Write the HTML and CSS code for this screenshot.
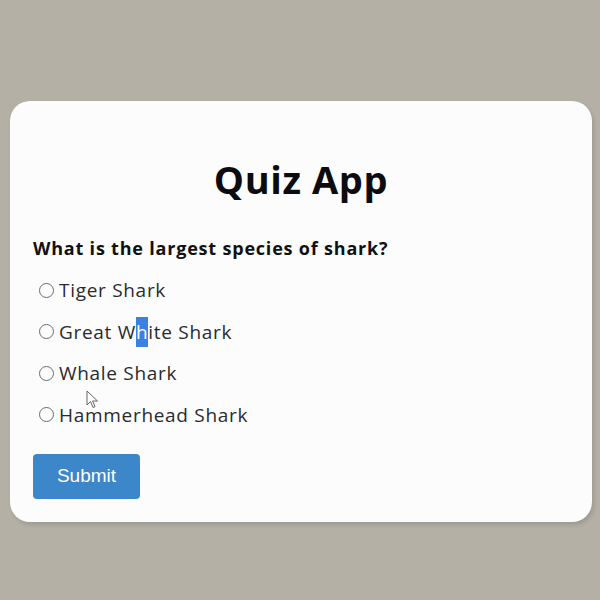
FILE: index.html
```html
<!DOCTYPE html>
<html>
<head>
<meta charset="utf-8">
<link rel="stylesheet" href="styles.css">
</head>
<body>
<div class="card">
  <h1 class="title">Quiz App</h1>
  <p class="question">What is the largest species of shark?</p>
  <ul class="options">
    <li class="option"><span class="radio"></span><span>Tiger Shark</span></li>
    <li class="option"><span class="radio"></span><span>Great W<span class="sel">h</span>ite Shark</span></li>
    <li class="option"><span class="radio"></span><span>Whale Shark</span></li>
    <li class="option"><span class="radio"></span><span>Hammerhead Shark</span>
      <svg class="cursor" width="14" height="20" viewBox="0 0 14 20"><path d="M1 1 L1 15 L4.5 11.5 L7 17.5 L9 16.7 L6.6 11 L11.5 11 Z" fill="#fff" stroke="#666" stroke-width="1" stroke-linejoin="round"/></svg>
    </li>
  </ul>
  <button class="submit">Submit</button>
</div>
</body>
</html>
```
FILE: styles.css
```css
html, body { margin: 0; padding: 0; }
body {
  background: #b4b0a6;
  width: 600px;
  height: 600px;
  font-family: "Open Sans", "DejaVu Sans", sans-serif;
  padding-top: 101px;
  box-sizing: border-box;
}
.card {
  margin-left: 10px;
  width: 582px;
  height: 421px;
  box-sizing: border-box;
  background: #fcfcfd;
  border-radius: 20px;
  box-shadow: 2px 3px 4px rgba(0,0,0,0.12);
  padding: 54px 23px 0 23px;
}
.title {
  margin: 0;
  text-align: center;
  font-size: 38px;
  font-weight: 700;
  color: #0c0c10;
  line-height: 48px;
  letter-spacing: 0.6px;
}
.question {
  margin: 33px 0 0 0;
  font-size: 18px;
  font-weight: 700;
  color: #111;
  line-height: 24px;
  letter-spacing: 0.8px;
}
.options {
  list-style: none;
  margin: 18px 0 0 0;
  padding: 0;
  display: flex;
  flex-direction: column;
  gap: 17.6px;
}
.option {
  display: flex;
  align-items: center;
  font-size: 19px;
  color: #2a2a2e;
  line-height: 24px;
  letter-spacing: 0.7px;
  position: relative;
}
.radio {
  width: 15px;
  height: 15px;
  border: 1.3px solid #6b6b6b;
  border-radius: 50%;
  margin: 0 5px 0 6px;
  box-sizing: border-box;
  flex: none;
}
.sel { background: #3b82e0; color: #fff; padding: 2px 0; }
.cursor { position: absolute; left: 53px; top: -13px; }
.submit {
  margin-top: 27px;
  width: 107px;
  height: 45px;
  border: none;
  border-radius: 4px;
  background: #3c87c9;
  color: #fff;
  font-family: "Liberation Sans", Arial, sans-serif;
  font-size: 19px;
  display: block;
}
```
